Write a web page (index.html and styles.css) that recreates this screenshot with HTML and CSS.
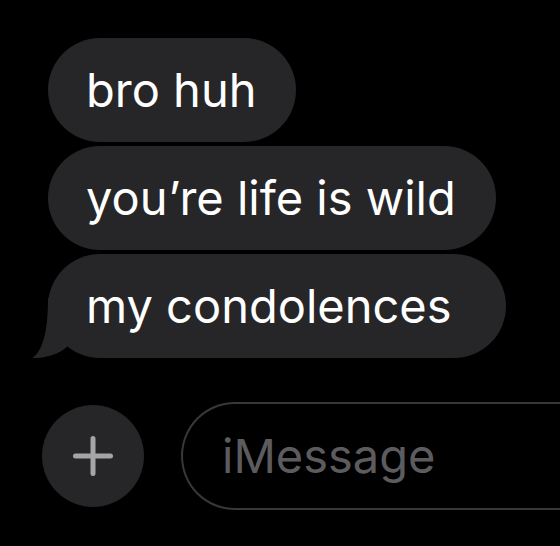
FILE: index.html
```html
<!DOCTYPE html>
<html lang="en">
<head>
    <meta charset="UTF-8">
    <meta name="viewport" content="width=device-width, initial-scale=1.0">
    <title>Messages</title>
    <link rel="stylesheet" href="styles.css">
</head>
<body>
    <div class="thread">
        <div class="bubble">bro huh</div>
        <div class="bubble">you’re life is wild</div>
        <div class="bubble last">my condolences
            <svg class="tail" width="50" height="60" viewBox="0 0 50 60">
                <path d="M16 0 C16 36 10 53 0.5 60 C12 60.5 26 57 36 48 L50 10 Z" fill="#262628"/>
            </svg>
        </div>
    </div>

    <div class="composer">
        <div class="plus">
            <svg width="40" height="40" viewBox="0 0 40 40">
                <path d="M20 2.5 V37.5 M2.5 20 H37.5" stroke="#a5a5a7" stroke-width="5" stroke-linecap="round"/>
            </svg>
        </div>
        <div class="field">iMessage</div>
    </div>
</body>
</html>
```

FILE: styles.css
```css
body{
    margin: 0;
    background: #000;
    font-family: Inter, "Noto Sans", sans-serif;
    overflow: hidden;
}

.thread{
    display: flex;
    flex-direction: column;
    align-items: flex-start;
    gap: 4px;
    padding: 38px 0 0 48px;
}

.bubble{
    position: relative;
    height: 104px;
    line-height: 104px;
    padding: 0 40px 0 38px;
    border-radius: 52px;
    background: #262628;
    color: #fff;
    font-size: 47px;
    white-space: nowrap;
}

.bubble.last{
    padding-right: 54px;
}

.tail{
    position: absolute;
    left: -16px;
    bottom: 0;
}

.composer{
    display: flex;
    align-items: center;
    gap: 37px;
    margin-top: 44px;
    padding-left: 42px;
}

.plus{
    flex: none;
    width: 102px;
    height: 102px;
    border-radius: 50%;
    background: #262628;
    display: flex;
    align-items: center;
    justify-content: center;
}

/* field runs off the right edge, so only its left end is rounded */
.field{
    flex: 1;
    height: 104px;
    line-height: 104px;
    border: 2px solid #38383a;
    border-right: none;
    border-radius: 54px 0 0 54px;
    padding-left: 39px;
    color: #5c5c5f;
    font-size: 47px;
}
```
